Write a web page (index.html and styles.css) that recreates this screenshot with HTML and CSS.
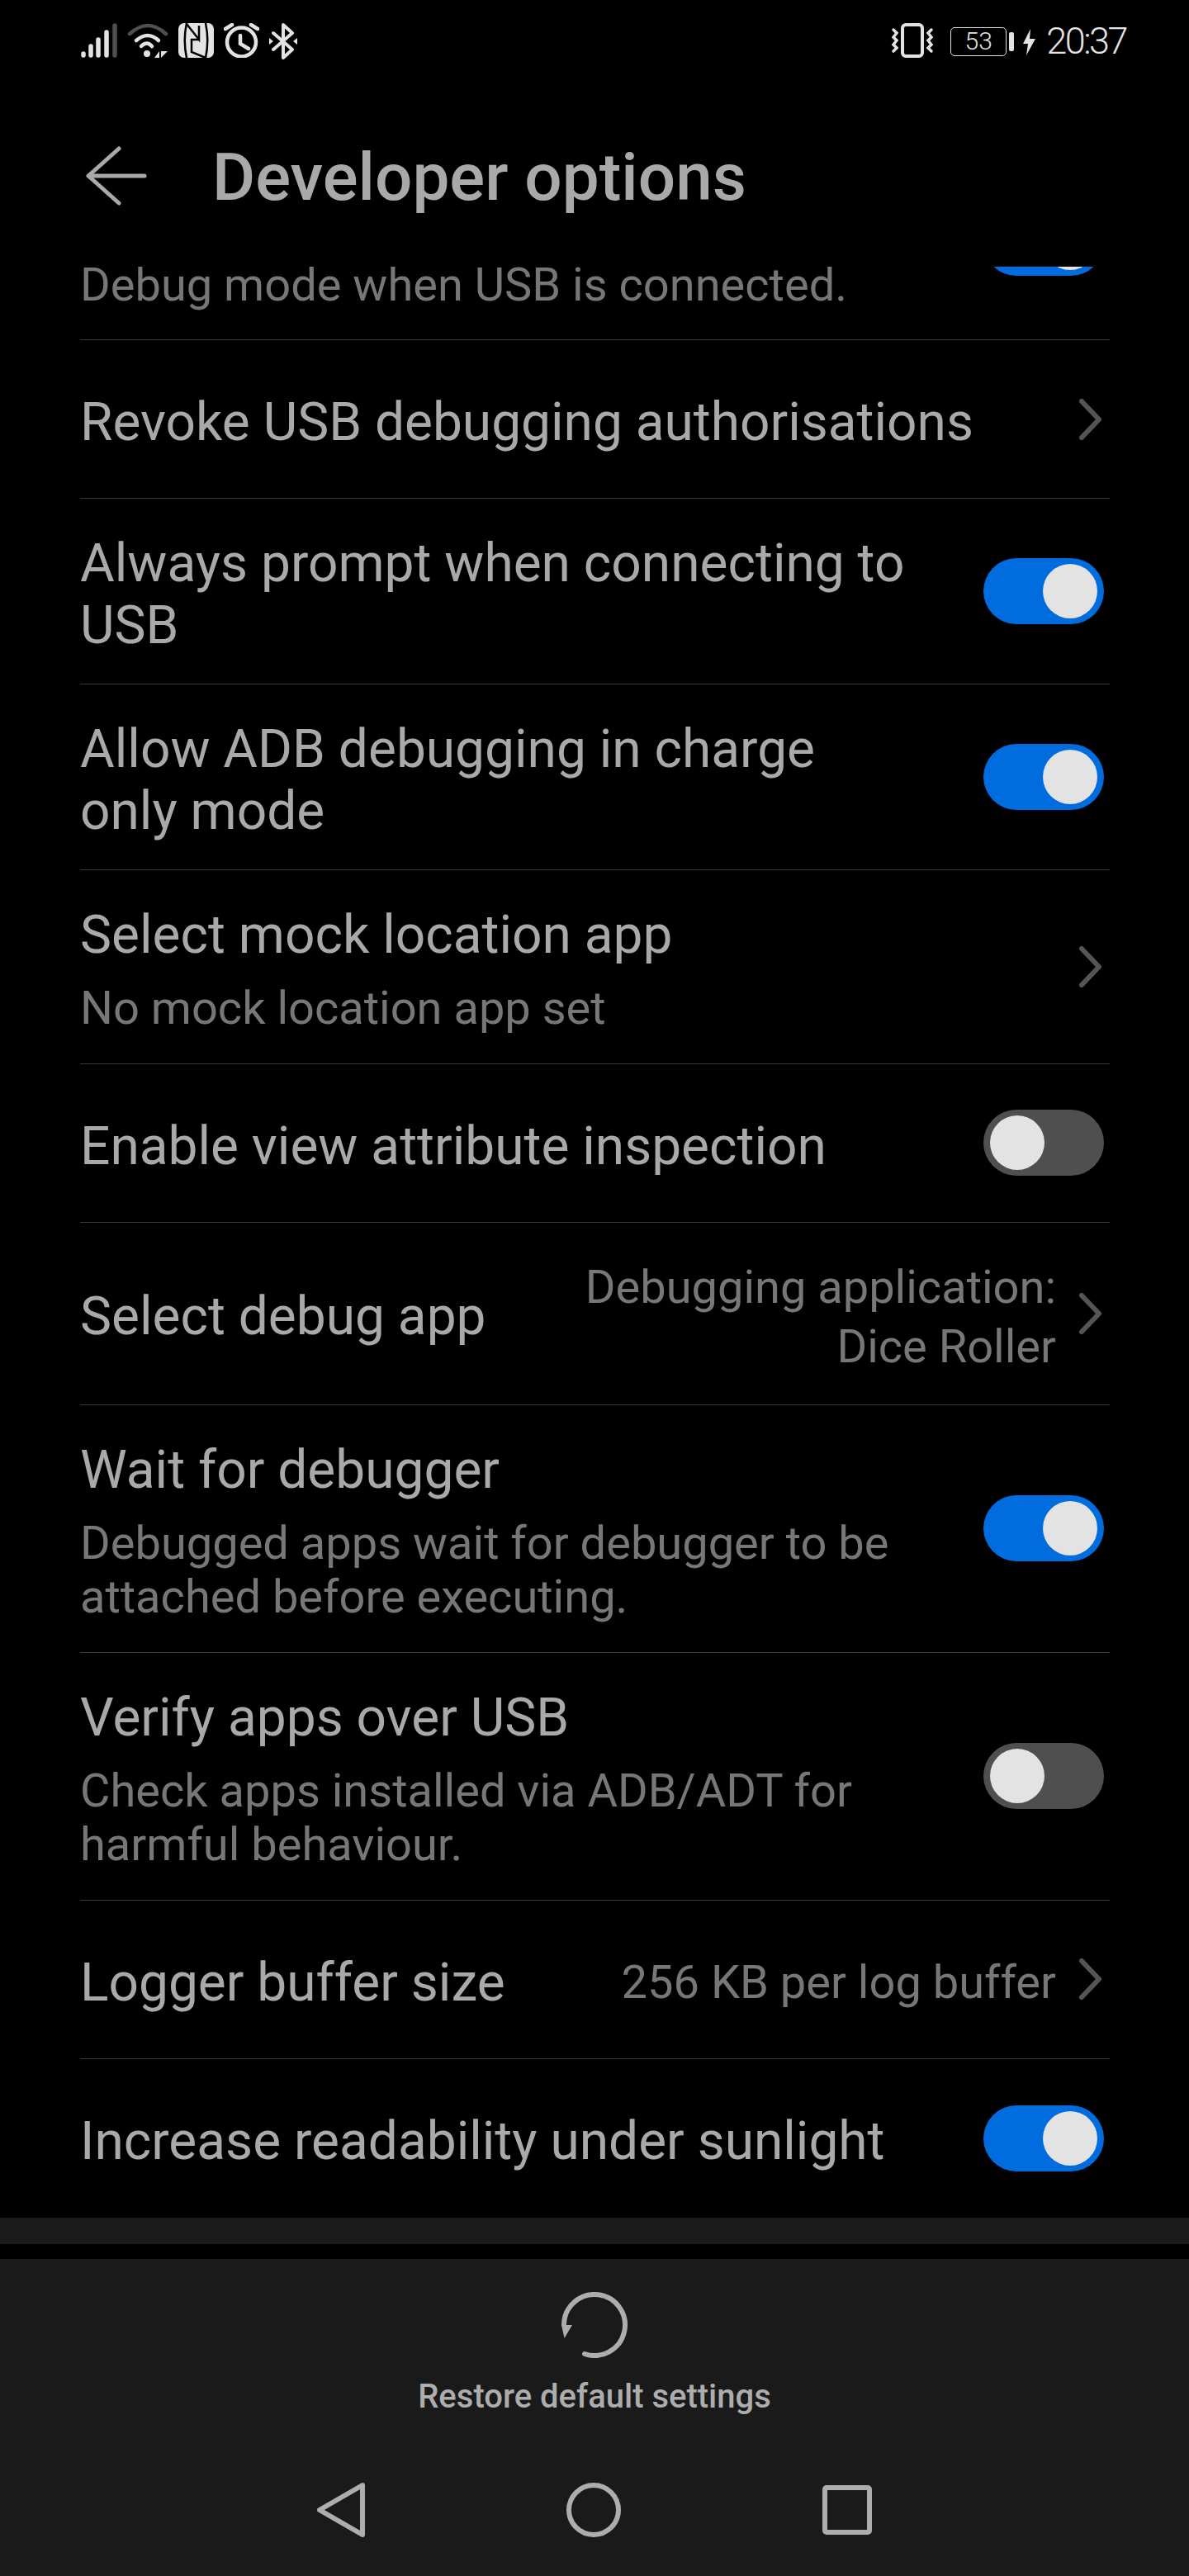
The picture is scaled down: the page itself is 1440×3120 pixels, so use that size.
FILE: index.html
```html
<!DOCTYPE html>
<html lang="en">
<head>
    <meta charset="UTF-8">
    <meta name="viewport" content="width=device-width, initial-scale=1.0">
    <title>Developer options</title>
    <link rel="stylesheet" href="styles.css">
</head>
<body>
    <div class="phone">
        <div class="status">
            <div class="status-left">
                <svg width="44" height="42" viewBox="0 0 44 42" stroke-linecap="round" stroke-width="5.500" stroke="#e3e3e3">
                    <path d="M3 37v2M12 28v11M21 20v19M31 11v28"/>
                    <path d="M41 3v36" stroke="#4f4f4f"/>
                </svg>
                <svg width="50" height="42" viewBox="0 0 50 42" fill="none" stroke-linecap="round" stroke-width="4.500" stroke="#e3e3e3">
                    <path d="M3 13Q25 -7 47 13" stroke="#4f4f4f"/>
                    <path d="M11 21Q25 9 38 21M17 28Q24 21 30 28"/>
                    <circle cx="24" cy="37" r="4" fill="#e3e3e3" stroke="none"/>
                    <path d="M39 34v8h-6zM41 34h8l-8 8z" fill="#e3e3e3" stroke="none"/>
                </svg>
                <svg width="43" height="42" viewBox="0 0 43 42">
                    <rect width="43" height="42" rx="7" fill="#e3e3e3"/>
                    <path d="M10 0C7 14 7 28 10 42M33 0C36 14 36 28 33 42" fill="none" stroke="#000" stroke-width="2.500"/>
                    <path d="M10 1L25 20V3M25 20L16 20V35L33 42" fill="none" stroke="#000" stroke-width="2.500"/>
                </svg>
                <svg width="43" height="42" viewBox="0 0 43 42" fill="none" stroke="#e3e3e3" stroke-width="4.500" stroke-linecap="round">
                    <circle cx="21.500" cy="23" r="17.500"/>
                    <path d="M20 15v10l10 6M2 7l8-5M41 7l-8-5"/>
                </svg>
                <svg width="34" height="44" viewBox="0 0 34 44" fill="none" stroke="#e3e3e3" stroke-width="4" stroke-linejoin="round" stroke-linecap="round">
                    <path d="M5 12L28 32 17 42V2L28 12 5 32"/>
                    <path d="M0 18v8l5-4zM34 18v8l-5-4z" fill="#e3e3e3" stroke="none"/>
                </svg>
            </div>
            <div class="status-right">
                <svg width="52" height="42" viewBox="0 0 52 42" fill="none" stroke="#e3e3e3" stroke-linecap="round">
                    <rect x="14" y="2" width="24" height="38" rx="4" stroke-width="4"/>
                    <path d="M3 8l4 4-4 5 4 4-4 5 4 4-4 4M49 8l-4 4 4 5-4 4 4 5-4 4 4 4" stroke-width="3.500"/>
                </svg>
                <div class="battery">53</div>
                <div class="battery-nub"></div>
                <svg class="bolt" width="15" height="32" viewBox="0 0 15 32"><path d="M9 0L0 18h6L4 32 15 12H8z" fill="#e3e3e3"/></svg>
                <span class="clock">20:37</span>
            </div>
        </div>

        <div class="header">
            <svg width="75" height="72" viewBox="0 0 75 72" fill="none" stroke="#a9a9a9" stroke-width="5" stroke-linecap="round" stroke-linejoin="round">
                <path d="M41 3L4 36l37 33M4 36h68"/>
            </svg>
            <h1>Developer options</h1>
        </div>

        <div class="list">
            <div class="row row-first">
                <div class="text">
                    <div class="sub">Debug mode when USB is connected.</div>
                </div>
                <div class="toggle on"></div>
            </div>
            <div class="row">
                <div class="title">Revoke USB debugging authorisations</div>
                <svg class="chevron" width="27" height="50" viewBox="0 0 27 50"><path d="M3 3l21 22L3 47"/></svg>
            </div>
            <div class="row">
                <div class="text"><div class="title">Always prompt when connecting to USB</div></div>
                <div class="toggle on"></div>
            </div>
            <div class="row">
                <div class="text"><div class="title">Allow ADB debugging in charge only mode</div></div>
                <div class="toggle on"></div>
            </div>
            <div class="row">
                <div class="text">
                    <div class="title">Select mock location app</div>
                    <div class="sub">No mock location app set</div>
                </div>
                <svg class="chevron" width="27" height="50" viewBox="0 0 27 50"><path d="M3 3l21 22L3 47"/></svg>
            </div>
            <div class="row">
                <div class="text"><div class="title">Enable view attribute inspection</div></div>
                <div class="toggle"></div>
            </div>
            <div class="row row-value">
                <div class="title">Select debug app</div>
                <div class="value value-wrap">Debugging application: Dice Roller</div>
                <svg class="chevron" width="27" height="50" viewBox="0 0 27 50"><path d="M3 3l21 22L3 47"/></svg>
            </div>
            <div class="row">
                <div class="text">
                    <div class="title">Wait for debugger</div>
                    <div class="sub">Debugged apps wait for debugger to be attached before executing.</div>
                </div>
                <div class="toggle on"></div>
            </div>
            <div class="row">
                <div class="text">
                    <div class="title">Verify apps over USB</div>
                    <div class="sub">Check apps installed via ADB/ADT for harmful behaviour.</div>
                </div>
                <div class="toggle"></div>
            </div>
            <div class="row">
                <div class="title">Logger buffer size</div>
                <div class="value">256 KB per log buffer</div>
                <svg class="chevron" width="27" height="50" viewBox="0 0 27 50"><path d="M3 3l21 22L3 47"/></svg>
            </div>
            <div class="row row-last">
                <div class="text"><div class="title">Increase readability under sunlight</div></div>
                <div class="toggle on"></div>
            </div>
        </div>

        <div class="band"></div>

        <div class="footer">
            <svg class="reset" width="80" height="80" viewBox="0 0 80 80" fill="none" stroke="#adadad" stroke-width="6" stroke-linecap="round">
                <path d="M3 39A37 37 0 1 1 28 75"/>
                <path d="M0 40h13L3.500 56z" fill="#adadad" stroke="none"/>
            </svg>
            <div class="restore">Restore default settings</div>
            <div class="nav">
                <svg width="58" height="66" viewBox="0 0 58 66" fill="none" stroke="#adadad" stroke-width="6" stroke-linejoin="round">
                    <path d="M55 3L3 33l52 30z"/>
                </svg>
                <svg width="66" height="66" viewBox="0 0 66 66" fill="none" stroke="#adadad" stroke-width="6"><circle cx="33" cy="33" r="30"/></svg>
                <svg width="60" height="60" viewBox="0 0 60 60" fill="none" stroke="#adadad" stroke-width="6" stroke-linejoin="round"><rect x="3" y="3" width="54" height="54" rx="2"/></svg>
            </div>
        </div>
    </div>
</body>
</html>
```
FILE: styles.css
```css
body {
    margin: 0;
    padding: 0;
    background-color: #000;
    font-family: Roboto, "Liberation Sans", sans-serif;
}
.phone {
    width: 1440px;
    height: 3120px;
    display: flex;
    flex-direction: column;
    overflow: hidden;
}
.status {
    height: 80px;
    padding: 28px 76px 0 98px;
    box-sizing: border-box;
    display: flex;
    justify-content: space-between;
    flex-shrink: 0;
}
.status-left {
    display: flex;
    gap: 12px;
    align-items: flex-start;
}
.status-right {
    display: flex;
    align-items: flex-start;
}
.battery {
    width: 68px;
    height: 35px;
    margin-left: 20px;
    margin-top: 5px;
    box-sizing: border-box;
    border: 1.5px solid #e3e3e3;
    border-radius: 5px;
    color: #e3e3e3;
    font-size: 30px;
    font-weight: 300;
    line-height: 32px;
    text-align: center;
}
.battery-nub {
    width: 6px;
    height: 23px;
    margin: 11px 0 0 3px;
    background-color: #e3e3e3;
    border-radius: 2px;
}
.bolt {
    margin: 7px 0 0 11px;
}
.clock {
    margin-left: 13px;
    color: #e3e3e3;
    font-size: 45px;
    font-weight: 350;
    letter-spacing: -2.5px;
    line-height: 44px;
}
.header {
    height: 243px;
    padding: 97px 0 0 103px;
    box-sizing: border-box;
    display: flex;
    align-items: flex-start;
    flex-shrink: 0;
}
.header h1 {
    margin: -7px 0 0 79px;
    color: #a9a9a9;
    font-size: 80px;
    font-weight: 500;
    line-height: 90px;
    white-space: nowrap;
}
.list {
    height: 2363px;
    overflow: hidden;
    padding: 0 96px 0 97px;
}
.row {
    min-height: 192px;
    padding: 37px 0;
    box-sizing: border-box;
    border-bottom: 1px solid #3a3a3a;
    display: flex;
    align-items: center;
}
/* row scrolled under the header, only its bottom shows */
.row-first {
    min-height: 0;
    margin-top: -69px;
    padding: 0 0 50px;
    align-items: flex-end;
}
.row-first .sub {
    margin-top: 0;
    line-height: 40px;
}
.row-first .toggle {
    margin-bottom: 27px;
}
.row-last {
    border-bottom: none;
}
.row-value {
    min-height: 221px;
}
.text {
    width: 1010px;
}
/* glyphs sit a little lower than the line box centre */
.text,
.row > .title,
.value {
    padding-top: 4px;
    margin-bottom: -4px;
}
.title {
    color: #a9a9a9;
    font-size: 64px;
    line-height: 75px;
}
.sub {
    margin-top: 19px;
    color: #777;
    font-size: 56px;
    line-height: 65.5px;
}
.value {
    margin-left: auto;
    color: #777;
    font-size: 56px;
    line-height: 72px;
    text-align: right;
}
.value-wrap {
    width: 600px;
}
.chevron {
    margin-left: 28px;
    margin-right: 10px;
    flex-shrink: 0;
    fill: none;
    stroke: #555;
    stroke-width: 6;
    stroke-linecap: round;
    stroke-linejoin: round;
}
.text + .chevron,
.title + .chevron {
    margin-left: auto;
}
.toggle {
    width: 146px;
    height: 80px;
    margin-left: auto;
    margin-right: 7px;
    padding: 7px 8px;
    box-sizing: border-box;
    border-radius: 40px;
    background-color: #4f4f4f;
    display: flex;
    flex-shrink: 0;
}
.toggle::after {
    content: "";
    width: 66px;
    height: 66px;
    border-radius: 50%;
    background-color: #e3e3e3;
}
.toggle.on {
    background-color: #006cde;
    justify-content: flex-end;
}
.band {
    height: 32px;
    margin-bottom: 18px;
    background-color: #1a1a1a;
    flex-shrink: 0;
}
.footer {
    flex: 1;
    background-color: #1a1a1a;
    display: flex;
    flex-direction: column;
    align-items: center;
    padding-top: 40px;
}
.restore {
    margin-top: 22px;
    color: #adadad;
    font-size: 40px;
    font-weight: 500;
    line-height: 50px;
}
.nav {
    margin-top: 79px;
    width: 672px;
    display: flex;
    justify-content: space-between;
    align-items: center;
}
```
